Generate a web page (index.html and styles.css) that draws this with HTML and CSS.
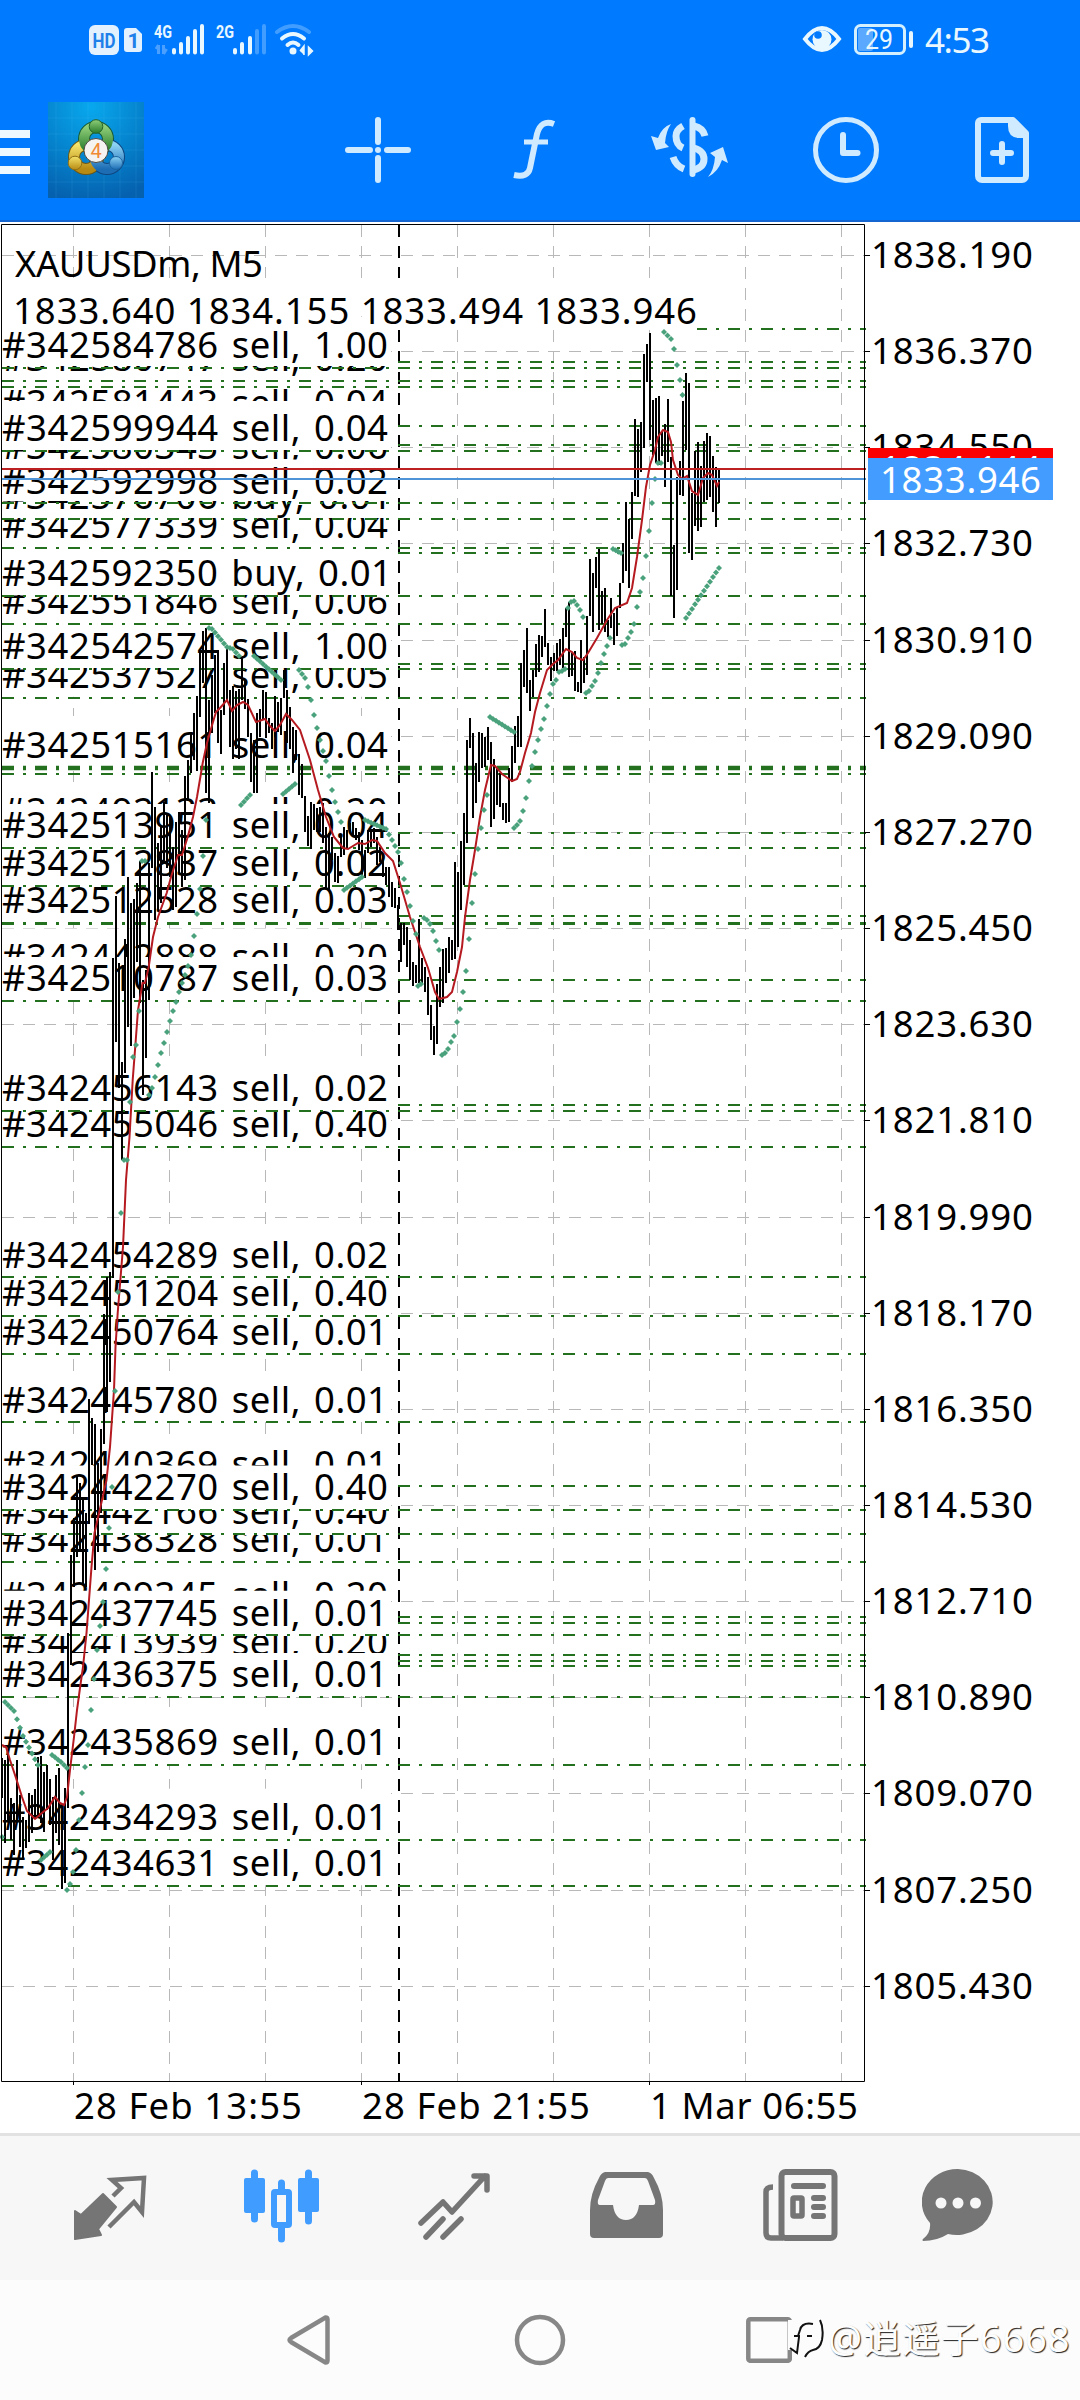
FILE: index.html
```
<!DOCTYPE html>
<html lang="en">
<head>
    <meta charset="UTF-8">
    <title>XAUUSDm, M5</title>
    <link rel="stylesheet" href="styles.css">
</head>
<body>
    <header class="header">
        <!-- Status bar -->
        <div class="status">
            <svg class="status-left" width="230" height="36" viewBox="86 22 230 36">
                <rect x="89" y="25" width="30" height="30" rx="6" fill="#e3f1ff"/>
                <text x="92.500" y="47.500" class="hd" textLength="23" lengthAdjust="spacingAndGlyphs">HD</text>
                <path d="M127 28h9l6 6v15a3 3 0 0 1-3 3h-12a3 3 0 0 1-3-3V31a3 3 0 0 1 3-3z" fill="#e3f1ff"/>
                <text x="127.500" y="47.500" class="hd">1</text>
                <text x="154" y="38" class="net" textLength="18" lengthAdjust="spacingAndGlyphs">4G</text>
                <path d="M158.500 45v9M156 49l2.500-4M163.500 45v9M166.500 49l-3 5" stroke="#4a9fff" stroke-width="3"/>
                <path d="M174 50v2.500M181 44v8.500M188 38v14.500M195 31v21.500M202 26v26.500" class="bars"/>
                <text x="216" y="38" class="net" textLength="18" lengthAdjust="spacingAndGlyphs">2G</text>
                <path d="M235 50v2.500M242 44v8.500M250 38v14.500" class="bars"/>
                <path d="M257 31v21.500M264 26v26.500" class="bars dim"/>
                <path d="M277 32q16-12 32 0" class="wave dim"/>
                <path d="M282 38.500q11-9 22 0M287.500 45q5.500-5 11 0" class="wave"/>
                <circle cx="293" cy="51" r="3.500" fill="#e9f7ff"/>
                <path d="M300 51l4-5v9M308.500 55v-8l4 4z" fill="#e9f7ff" stroke="#e9f7ff" stroke-width="1.500"/>
            </svg>
            <svg class="status-right" width="190" height="36" viewBox="802 22 190 36">
                <path d="M805 39q17-22 34 0q-17 22-34 0z" fill="none" stroke="#e9f7ff" stroke-width="4"/>
                <circle cx="822" cy="39.500" r="9.500" fill="#e9f7ff"/>
                <circle cx="818" cy="35" r="3.800" fill="#007aff"/>
                <rect x="858" y="28" width="15" height="23" rx="2" fill="#5aa9ff"/>
                <rect x="855.500" y="25.500" width="49" height="28" rx="5" fill="none" stroke="#d4f0ff" stroke-width="3"/>
                <path d="M911 33v13" stroke="#e9f7ff" stroke-width="4" stroke-linecap="round"/>
                <text x="865" y="49" class="batt" textLength="28" lengthAdjust="spacingAndGlyphs">29</text>
                <text x="925" y="53" class="time" textLength="65">4:53</text>
            </svg>
        </div>

        <!-- Toolbar -->
        <div class="toolbar">
            <svg class="menu" width="30" height="44" viewBox="0 0 30 44">
                <path d="M0 4h30M0 22h30M0 40h30" stroke="#eef9ff" stroke-width="8"/>
            </svg>
            <svg class="logo" width="96" height="96" viewBox="0 0 96 96">
                <defs>
                    <radialGradient id="sky" cx="45%" cy="5%" r="100%">
                        <stop offset="0" stop-color="#08a8ee"/>
                        <stop offset="0.500" stop-color="#0585cf"/>
                        <stop offset="1" stop-color="#0560ae"/>
                    </radialGradient>
                    <linearGradient id="green" x2="0" y2="1"><stop offset="0" stop-color="#8fce79"/><stop offset="1" stop-color="#287b2c"/></linearGradient>
                    <linearGradient id="gold" x2="0" y2="1"><stop offset="0" stop-color="#f5e36a"/><stop offset="1" stop-color="#b78a13"/></linearGradient>
                    <linearGradient id="blue" x2="0" y2="1"><stop offset="0" stop-color="#8cd2f4"/><stop offset="1" stop-color="#1d6db5"/></linearGradient>
                </defs>
                <rect width="96" height="96" fill="url(#sky)"/>
                <path d="M8 0v96M24 0v96M40 0v96M56 0v96M72 0v96M88 0v96M0 16h96M0 32h96M0 48h96M0 64h96M0 80h96" stroke="#6cc6ff" stroke-opacity="0.120"/>
                <circle cx="48" cy="37" r="12" fill="none" stroke="#165a36" stroke-width="12"/>
                <circle cx="38" cy="55" r="12" fill="none" stroke="#6c5715" stroke-width="12"/>
                <circle cx="59" cy="55" r="12" fill="none" stroke="#0e4580" stroke-width="12"/>
                <circle cx="38" cy="55" r="12" fill="none" stroke="url(#gold)" stroke-width="10"/>
                <circle cx="59" cy="55" r="12" fill="none" stroke="url(#blue)" stroke-width="10"/>
                <circle cx="48" cy="37" r="12" fill="none" stroke="url(#green)" stroke-width="10"/>
                <circle cx="48" cy="24.500" r="6.800" fill="url(#green)" stroke="#25632a"/>
                <circle cx="27" cy="61" r="6.800" fill="url(#gold)" stroke="#907015"/>
                <circle cx="68" cy="61" r="6.500" fill="url(#blue)" stroke="#1b64a1"/>
                <circle cx="48" cy="48.500" r="12" fill="#f4f3f2" stroke="#4c4b43"/>
                <text x="48" y="56" class="four">4</text>
            </svg>
            <svg class="cross" width="66" height="66" viewBox="0 0 66 66">
                <path d="M33 3v22M33 41v22M3 33h22M42 33h21" class="thick"/>
                <circle cx="33" cy="33" r="3" fill="#d0eaff"/>
            </svg>
            <svg class="func" width="44" height="62" viewBox="0 0 44 62">
                <path d="M41 5q-13-5-17 10l-7 34q-2 10-16 7" fill="none" stroke="#d0eaff" stroke-width="6"/>
                <path d="M11 23h24" stroke="#d0eaff" stroke-width="5"/>
            </svg>
            <svg class="dollar" width="80" height="62" viewBox="0 0 80 62">
                <path d="M42.500 3v54" class="thick"/>
                <path d="M33 9q-7 4-7 10q0 9 7 12M23 40q3 9 11 12M44 9q9 2 11 10M44 31q10 3 10 11q0 8-10 11" fill="none" stroke="#d0eaff" stroke-width="7"/>
                <path d="M21 7q-9 3-13 14l-7-2l5 14l13-3l-4-4q1-12 6-19zM58 60q10-5 14-17l6 3l-5-16l-13 6l5 4q-1 13-7 20z" fill="#d0eaff"/>
            </svg>
            <svg class="clock" width="68" height="68" viewBox="0 0 68 68">
                <circle cx="34" cy="34" r="30.500" fill="none" stroke="#d0eaff" stroke-width="5"/>
                <path d="M31 19v18h14.500" class="thick" stroke-linejoin="round"/>
            </svg>
            <svg class="doc" width="54" height="66" viewBox="0 0 54 66">
                <path d="M6 3h32l13 13v43a4 4 0 0 1-4 4H7a4 4 0 0 1-4-4V6a3 3 0 0 1 3-3z" fill="none" stroke="#d0eaff" stroke-width="6" stroke-linejoin="round"/>
                <path d="M33 3h5l14 15v3h-9q-10-1-10-12z" fill="#d0eaff"/>
                <path d="M18 36h18M27 27v18" class="thick"/>
            </svg>
        </div>
    </header>

    <!-- Chart, filled in by the script below -->
    <svg id="chart" class="chart" width="1080" height="1911" viewBox="0 222 1080 1911"></svg>

    <nav class="tabs">
        <svg class="tab" width="73" height="66" viewBox="0 0 73 66">
            <path d="M1 36l6 4L29 19l13 13l-18 22l3 6l-26 4z" fill="#757575" stroke="#757575" stroke-width="2" stroke-linejoin="round"/>
            <path d="M39 21l8-8l-9-8l32-2l-2 34l-8-10l-25 25" fill="none" stroke="#757575" stroke-width="4.500"/>
        </svg>
        <svg class="tab candles" width="75" height="74" viewBox="0 0 75 74">
            <path d="M10.500 4v46M64.500 4v48M37.500 14v9M37.500 58v12" stroke="#409cff" stroke-width="7" stroke-linecap="round"/>
            <rect x="0" y="9" width="21" height="35" rx="2" fill="#409cff"/>
            <rect x="54" y="9" width="21" height="34" rx="2" fill="#409cff"/>
            <rect x="30" y="23" width="15" height="33" rx="1" fill="#f7f7f7" stroke="#409cff" stroke-width="6"/>
        </svg>
        <svg class="tab trend" width="72" height="68" viewBox="0 0 72 68">
            <path d="M3 51l22-21l9 10L67 4M56 4h13v14M8 65l17-18M25 65l18-18" fill="none" stroke="#757575" stroke-width="5.500" stroke-linecap="round" stroke-linejoin="round"/>
        </svg>
        <svg class="tab inbox" width="73" height="66" viewBox="0 0 73 66">
            <path d="M15 0h43q4 1 6 6q9 16 9 32v24q0 4-4 4H4q-4 0-4-4V38Q0 22 9 6q2-5 6-6z" fill="#757575"/>
            <path d="M18 6h37q2 0 3 3l7 19q1 5-2 5H49q-2 15-13 15T23 33H10q-3 0-2-5l7-19q1-3 3-3z" fill="#f7f7f7"/>
        </svg>
        <svg class="tab news" width="75" height="72" viewBox="0 0 75 72">
            <rect x="18.500" y="3" width="53" height="66" rx="4" fill="none" stroke="#757575" stroke-width="6"/>
            <path d="M10 18q-7 0-7 5v41q0 5 5 5h12" fill="none" stroke="#757575" stroke-width="5.500"/>
            <path d="M31 17h29M51 29h9M51 38h9M51 47h9" stroke="#757575" stroke-width="6" stroke-linecap="round"/>
            <rect x="30" y="29" width="9" height="18" rx="1" fill="none" stroke="#757575" stroke-width="5.500"/>
        </svg>
        <svg class="tab chat" width="72" height="72" viewBox="0 0 72 72">
            <path d="M36 0a36 33 0 1 1-10 65Q15 72 1 72q-1-1 0-2q8-6 7-16A36 33 0 0 1 36 0z" fill="#757575"/>
            <circle cx="19" cy="34" r="5.500" fill="#f7f7f7"/>
            <circle cx="36" cy="34" r="5.500" fill="#f7f7f7"/>
            <circle cx="53.500" cy="34" r="5.500" fill="#f7f7f7"/>
        </svg>
    </nav>

    <footer class="system">
        <svg class="back" width="44" height="50" viewBox="0 0 44 50">
            <path d="M38.500 2.500q2 0 2 2v41q0 2-2 2L4 27q-3-2 0-4z" fill="none" stroke="#878787" stroke-width="4.500"/>
        </svg>
        <svg class="home" width="52" height="52" viewBox="0 0 52 52">
            <circle cx="26" cy="26" r="23" fill="none" stroke="#878787" stroke-width="4.500"/>
        </svg>
        <svg class="recent" width="46" height="46" viewBox="0 0 46 46">
            <rect x="2.300" y="2.300" width="41.500" height="41.500" rx="2" fill="none" stroke="#878787" stroke-width="4.500"/>
        </svg>
        <div class="watermark">
            <svg width="38" height="46" viewBox="0 0 38 46">
                <path d="M1 6h6l8-5h14v38l-10-4l-18 1z" fill="#fcfcfc"/>
                <path d="M26 10q-11-2-13 6l-2 6M7 22h6M12 23l-2 16l-7-5M20 22h5M33 6q4 8 2 20q-2 9-9 10q-5 1-8 7" fill="none" stroke="#111" stroke-width="2"/>
            </svg>
            <span class="author">@逍遥子6668</span>
        </div>
    </footer>

    <script>
        const svg = document.getElementById('chart');
        const NS = 'http://www.w3.org/2000/svg';

        function add(tag, attrs, text) {
            const el = document.createElementNS(NS, tag);
            for (const key in attrs) el.setAttribute(key, attrs[key]);
            if (text) el.textContent = text;
            svg.appendChild(el);
            return el;
        }

        function line(x1, y1, x2, y2, cls) {
            add('path', { d: 'M' + x1 + ' ' + y1 + 'L' + x2 + ' ' + y2, class: cls });
        }

        function label(text, x, y, width, cls) {
            return add('text', { x: x, y: y, textLength: width, class: cls || 'label' }, text);
        }

        // grid
        const rows = [];
        for (let i = 0; i < 19; i++) rows.push(Math.round(255 + i * 96.15) + 0.5);
        for (const y of rows) line(2, y, 864, y, 'grid');
        for (let x = 73.5; x < 864; x += 96) line(x, 225, x, 2081, 'grid');
        line(399, 225, 399, 2081, 'day');

        // orders: text, baseline, visible top, visible bottom
        const orders = [
            ['#342584786 sell, 1.00', 357.7, 320, 367],
            ['#342580747 sell, 0.20', 370.7, 366, 380],
            ['#342581443 sell, 0.04', 415, 380, 401],
            ['#342599944 sell, 0.04', 440.3, 401, 450],
            ['#342580343 sell, 0.06', 458.3, 450, 459.5],
            ['#342592998 sell, 0.02', 493.3, 460, 502],
            ['#342576706 buy, 0.01', 508, 501, 518],
            ['#342577339 sell, 0.04', 537.3, 518, 549],
            ['#342592350 buy, 0.01', 585.7, 549, 596],
            ['#342551846 sell, 0.06', 613.7, 595, 624],
            ['#342542574 sell, 1.00', 658.7, 624, 669],
            ['#342537527 sell, 0.05', 687.3, 668, 698],
            ['#342515161 sell, 0.04', 757, 715, 768],
            ['#342492133 sell, 0.20', 823, 780, 804],
            ['#342513951 sell, 0.04', 837.3, 804, 848],
            ['#342512837 sell, 0.02', 875.7, 848, 886],
            ['#342512528 sell, 0.03', 912.7, 886, 923],
            ['#342442888 sell, 0.20', 969.5, 930, 957],
            ['#342510787 sell, 0.03', 990.7, 957, 1001],
            ['#342456143 sell, 0.02', 1100.7, 1060, 1111],
            ['#342455046 sell, 0.40', 1136.7, 1109, 1147],
            ['#342454289 sell, 0.02', 1267, 1227, 1277],
            ['#342451204 sell, 0.40', 1305.7, 1277, 1316],
            ['#342450764 sell, 0.01', 1344, 1316, 1354],
            ['#342445780 sell, 0.01', 1412, 1371, 1422],
            ['#342440369 sell, 0.01', 1476, 1436, 1465.5],
            ['#342442270 sell, 0.40', 1499.7, 1466, 1510],
            ['#342442166 sell, 0.40', 1523.7, 1510, 1534],
            ['#342438328 sell, 0.01', 1551.7, 1535, 1562],
            ['#342409345 sell, 0.20', 1607, 1566, 1590.7],
            ['#342437745 sell, 0.01', 1625, 1591, 1635],
            ['#342413939 sell, 0.20', 1654.5, 1636, 1653],
            ['#342436375 sell, 0.01', 1686.7, 1653, 1697],
            ['#342435869 sell, 0.01', 1754.7, 1714, 1765],
            ['#342434293 sell, 0.01', 1829.7, 1789, 1840],
            ['#342434631 sell, 0.01', 1875.7, 1840, 1886]
        ];
        for (const o of orders) add('rect', { x: 2, y: o[1] - 41, width: 389, height: 50.5, class: 'cover' });

        orders.forEach((o, i) => {
            const clip = add('clipPath', { id: 'clip' + i });
            const rect = document.createElementNS(NS, 'rect');
            rect.setAttribute('width', 392);
            rect.setAttribute('y', o[2]);
            rect.setAttribute('height', o[3] - o[2]);
            clip.appendChild(rect);
            const t = label(o[0], 2, o[1] + 0.5, o[0].includes('buy') ? 390 : 386, 'label ticket');
            t.setAttribute('clip-path', 'url(#clip' + i + ')');
        });

        // order levels over the full width
        for (const y of [368, 381, 387, 451, 503, 519, 548, 596, 624, 669, 698, 774, 848, 886, 1001, 1111, 1147, 1277, 1316, 1354, 1422, 1510, 1534, 1562, 1635, 1697, 1765, 1840, 1886])
            line(2, y, 866, y, 'order');
        line(2, 768, 866, 768, 'order thick3');
        line(2, 923.5, 866, 923.5, 'order thick2');
        // levels that start right of the order texts
        for (const y of [362, 426, 445, 553, 664, 833, 916, 980, 1105, 1486, 1617, 1623, 1655, 1661, 1666])
            line(398, y, 866, y, 'order');
        line(695, 329, 866, 329, 'order');

        // symbol and OHLC
        add('rect', { x: 2, y: 278, width: 695, height: 38, class: 'cover' });
        add('rect', { x: 391, y: 278, width: 306, height: 52, class: 'cover' });
        label('XAUUSDm, M5', 15, 277, 248);
        label('1833.640 1834.155 1833.494 1833.946', 13, 324, 684);

        // high and low of each bar, one bar every 3px
        const bars = [
            1758,1798, 1760,1843, 1755,1820, 1798,1840, 1803,1855, 1760,1820, 1795,1847, 1817,1858, 1820,1848, 1793,1842,
            1795,1833, 1789,1818, 1757,1815, 1756,1823, 1772,1832, 1765,1810, 1779,1825, 1797,1860, 1775,1833, 1768,1845,
            1812,1889, 1788,1883, 1633,1808, 1555,1665, 1518,1587, 1475,1557, 1483,1552, 1497,1585, 1513,1587, 1399,1524,
            1418,1465, 1424,1570, 1463,1552, 1429,1513, 1314,1444, 1277,1412, 1272,1382, 958,1278, 896,1042, 963,1088,
            1062,1160, 939,1073, 877,1027, 903,1046, 899,998, 883,962, 861,1003, 980,1095, 970,1058, 863,1000,
            772,868, 807,920, 843,910, 827,903, 802,863, 813,868, 817,877, 847,910, 822,907, 812,873,
            830,887, 776,880, 760,801, 733,773, 713,760, 696,771, 653,717, 631,683, 628,793, 700,803,
            675,733, 655,713, 650,743, 710,754, 663,715, 648,700, 690,747, 686,759, 691,749, 689,759,
            658,700, 680,709, 699,737, 733,782, 740,793, 713,793, 709,737, 690,719, 692,738, 718,733,
            723,749, 696,737, 702,732, 698,735, 670,698, 690,743, 707,749, 727,773, 730,760, 754,795,
            764,798, 796,832, 816,846, 802,849, 804,830, 808,832, 807,832, 803,843, 827,888, 833,889,
            837,860, 853,882, 856,883, 837,857, 827,855, 830,848, 823,833, 822,837, 828,840, 832,850,
            840,877, 850,878, 830,853, 830,847, 828,843, 837,865, 847,862, 860,877, 867,885, 867,897,
            882,907, 888,908, 905,930, 923,962, 923,945, 927,967, 940,980, 962,986, 965,983, 919,983,
            958,985, 967,992, 977,1015, 1005,1040, 1026,1055, 984,1044, 967,1007, 949,1003, 948,983, 937,973,
            940,960, 862,959, 872,947, 841,910, 813,885, 740,843, 718,748, 733,818, 763,803, 732,782,
            733,768, 737,767, 727,760, 742,827, 759,819, 768,805, 773,807, 803,820, 803,823, 768,822,
            746,782, 726,763, 716,747, 663,747, 650,687, 628,693, 680,711, 670,697, 644,677, 635,672,
            636,657, 609,647, 643,665, 657,681, 653,671, 643,671, 639,665, 628,668, 608,637, 602,677,
            653,676, 651,691, 682,692, 640,693, 657,683, 616,675, 559,616, 573,632, 557,588, 549,630,
            591,624, 588,632, 620,637, 598,628, 613,645, 607,636, 583,608, 543,583, 502,571, 519,588,
            492,539, 419,496, 429,497, 422,472, 354,448, 344,382, 333,440, 400,455, 398,463, 396,465,
            432,456, 424,487, 399,462, 457,596, 545,618, 477,590, 461,495, 401,496, 373,450, 383,553,
            493,560, 451,526, 442,531, 466,527, 441,502, 433,500, 436,497, 456,512, 467,527, 468,503
        ];
        for (let i = 0; i < bars.length; i += 2) {
            const x = 2 + i / 2 * 3;
            line(x, bars[i], x, bars[i + 1], 'candle');
        }

        // moving average
        add('polyline', { class: 'average', points: '2,1745 6,1747 10,1760 16,1778 22,1797 27,1811 35,1819 42,1813 48,1808 55,1797 60,1803 64,1805 67,1797 70,1770 74,1737 77,1710 80,1688 83,1667 86.500,1633 91.500,1567 94.500,1533 102,1500 106.500,1480 110,1447 114,1390 115.500,1347 117.700,1313 123,1247 126,1180 129.500,1137 132.700,1080 135,1050 138,1010 142.500,983 145,983 148.700,967 153,937 158,917 166.700,893 171,877 178,855 182,855 187.700,837 193,817 197,797 202.700,763 207,743 212.700,723 216,712 220,708 227,700 232,711 237,705 243,702 248,705 256,722 265,719 270,726 275,731 280,725 286,714 292,720 300,730 310,760 318,790 326,817 334,837 343,848 348,849 358,843 365,844 372,840 377,841 385,853 393,861 400,883 410,917 420,947 428,968 435,992 439,999 447,997 452,992 457,972 462,947 465,917 470,880 475,850 480,817 485,790 491,765 495,766 502,774 512,781 517,779 520,772 525,753 531,733 535,712 540,693 547,670 553,664 558,660 566,649 572,652 577,658 583,660 588,653 597,638 607,620 615,608 627,603 632,588 637,557 642,520 646,487 650,465 655,450 658,437 663,430 668,432 671,442 673,460 678,475 682,479 687,476 692,491 698,495 703,478 708,473 712,475 717,486 719,482' });

        // parabolic SAR, runs of dots
        const runs = [
            [2,1837],
            [5,1702, 14,1711, 23,1736, 38,1765],
            [52,1755, 61,1762, 67,1768],
            [41,1860, 50,1852],
            [67,1890, 70,1884, 73,1872, 76,1850, 79,1820, 82,1793, 85,1767, 88,1745, 91,1710, 94,1679, 97,1650, 100,1626, 103,1602, 106,1569, 109,1528, 112,1487, 115,1391, 118,1292, 121,1213, 124,1160, 127,1160, 130,1102, 133,1057, 136,1045, 139,1011],
            [142,861, 145,861],
            [149,1095, 152,1088, 155,1077, 158,1065, 161,1053, 164,1043, 167,1032, 170,1021, 173,1011, 176,1002, 179,992, 182,983, 185,975, 188,966, 191,955, 194,936, 197,914, 200,889, 203,856, 206,820],
            [209,628, 212,629, 227,647, 233,649, 239,656],
            [254,656, 281,680],
            [241,805, 250,795],
            [283,794, 295,784],
            [299,670, 302,674, 305,678, 308,687, 311,700, 314,715, 317,728, 320,740, 323,751, 326,761, 329,776, 332,790, 335,802, 338,812, 341,822],
            [344,890, 362,877],
            [365,820, 374,824, 386,829, 392,840, 398,852, 401,863, 404,879, 407,892, 410,906, 413,921, 416,934],
            [418,986, 421,984],
            [424,918, 427,920, 430,924, 433,931, 436,941, 439,950],
            [442,1055, 445,1053, 448,1049, 451,1042, 454,1036, 457,1022, 460,1009, 463,992, 466,971, 469,939, 472,903, 475,874, 478,849, 481,828, 484,810, 487,795],
            [490,717, 514,732],
            [514,828, 517,825, 520,821, 523,811, 526,798, 529,781, 532,766, 535,752, 538,740, 541,729, 544,719, 547,706, 550,694, 553,684, 556,680, 559,672, 562,671, 565,669],
            [568,608, 571,602, 574,601, 577,605, 580,610, 583,617],
            [586,693, 589,691, 592,686, 595,681, 598,673, 601,663, 604,654, 607,646, 610,638],
            [613,549, 621,553],
            [622,645, 625,644, 628,638, 631,632, 634,624, 637,607, 640,592, 643,578, 646,556, 649,531, 652,503, 655,479, 658,463, 661,463],
            [664,332, 671,339],
            [674,349], [677,365], [680,380], [682.5,395],
            [686,618, 719,568]
        ];
        function dot(x, y) {
            add('path', { d: 'M' + (x - 3) + ' ' + y + 'l3-3 3 3-3 3z', class: 'sar' });
        }
        for (const r of runs) {
            dot(r[0], r[1]);
            for (let i = 2; i < r.length; i += 2) {
                const steps = Math.max(1, Math.round((r[i] - r[i - 2]) / 3));
                for (let s = 1; s <= steps; s++)
                    dot(r[i - 2] + (r[i] - r[i - 2]) * s / steps, r[i - 1] + (r[i + 1] - r[i - 1]) * s / steps);
            }
        }

        line(2, 469, 866, 469, 'ask');
        line(2, 479, 866, 479, 'bid');

        // frame and axes
        add('path', { d: 'M1.500 224.500H864.500V2081.500H1.500z', class: 'frame' });
        rows.forEach((y, i) => {
            line(864, y, 870, y, 'frame');
            label((1838.19 - i * 1.82).toFixed(3), 871, y + 12.5, 162);
        });
        for (const x of [73.5, 361.5, 649.5]) line(x, 2081, x, 2085, 'frame');
        label('28 Feb 13:55', 74, 2119, 228);
        label('28 Feb 21:55', 362, 2119, 228);
        label('1 Mar 06:55', 650, 2119, 208);

        // ask and bid boxes
        add('rect', { x: 868, y: 448, width: 185, height: 20, class: 'ask-box' });
        label('1834.144', 880, 482, 161, 'light');
        add('rect', { x: 868, y: 458, width: 185, height: 42, class: 'bid-box' });
        label('1833.946', 880, 492.5, 161, 'light');
    </script>
</body>
</html>
```
FILE: styles.css
```
body {
    margin: 0;
    width: 1080px;
    height: 2400px;
    overflow: hidden;
    background-color: #fff;
    font-family: "Noto Sans", "Noto Sans CJK SC", sans-serif;
}
svg {
    display: block;
    flex: none;
}
.header {
    box-sizing: border-box;
    height: 222px;
    background-color: #007aff;
    border-bottom: 2px solid #1565d0;
}
.status {
    display: flex;
    justify-content: space-between;
    height: 58px;
    padding: 22px 88px 0 86px;
    box-sizing: border-box;
}
.hd {
    font: bold 21px "Roboto", sans-serif;
    fill: #1f80ea;
}
.net {
    font: bold 18px "Roboto", sans-serif;
    fill: #e9f7ff;
}
.bars {
    stroke: #e9f7ff;
    stroke-width: 4px;
    stroke-linecap: round;
}
.wave {
    fill: none;
    stroke: #e9f7ff;
    stroke-width: 4px;
    stroke-linecap: round;
}
.dim {
    stroke: #419dff;
}
.batt {
    font: 27px "Roboto", sans-serif;
    fill: #e9f7ff;
}
.time {
    font: 35px "Noto Sans", sans-serif;
    fill: #e9f7ff;
}
.toolbar {
    display: flex;
    align-items: center;
    height: 96px;
    margin-top: 44px;
}
.thick {
    fill: none;
    stroke: #d0eaff;
    stroke-width: 6px;
    stroke-linecap: round;
}
.menu {
    margin-top: 4px;
}
.logo {
    margin-left: 18px;
}
.four {
    font: 20px "Roboto", sans-serif;
    fill: #f08a35;
    text-anchor: middle;
}
.cross {
    margin-left: 201px;
}
.func {
    margin-left: 102px;
}
.dollar {
    margin-left: 93px;
    margin-top: -4px;
}
.clock {
    margin-left: 82px;
}
.doc {
    margin-left: 95px;
}

/* chart */
.chart {
    font-family: "Noto Sans", sans-serif;
    font-size: 36.5px;
    fill: #000;
    background-color: #fff;
}
.chart .ticket {
    word-spacing: 3px;
}
.chart .grid {
    stroke: #b8b8b8;
    stroke-width: 1px;
    stroke-dasharray: 12 9;
}
.chart .day {
    stroke: #000;
    stroke-width: 2px;
    stroke-dasharray: 12 9;
}
.chart .cover {
    fill: #fff;
}
.chart .order {
    stroke: #23701f;
    stroke-width: 2px;
    stroke-dasharray: 12 9 3 9;
}
.chart .thick2 {
    stroke-width: 3px;
}
.chart .thick3 {
    stroke-width: 4.5px;
}
.chart .frame {
    fill: none;
    stroke: #000;
    stroke-width: 1px;
}
.chart .candle {
    stroke: #000;
    stroke-width: 2px;
}
.chart .average {
    fill: none;
    stroke: #b51a20;
    stroke-width: 2px;
}
.chart .sar {
    fill: #4aa27c;
}
.chart .ask {
    stroke: #bc2020;
    stroke-width: 2px;
}
.chart .bid {
    stroke: #4f94d6;
    stroke-width: 2px;
}
.chart .ask-box {
    fill: #fb0000;
}
.chart .bid-box {
    fill: #439cff;
}
.chart .light {
    fill: #fff;
}

/* bottom tabs */
.tabs {
    display: flex;
    align-items: flex-start;
    box-sizing: border-box;
    height: 147px;
    padding: 36px 0 0 74px;
    background-color: #f7f7f7;
    border-top: 3px solid #e2e2e2;
}
.tab {
    margin-top: 3px;
}
.candles {
    margin: -3px 0 0 97px;
}
.trend {
    margin: 0 0 0 99px;
}
.inbox {
    margin: 0 0 0 100px;
}
.news {
    margin: -3px 0 0 100px;
}
.chat {
    margin: -3px 0 0 84px;
}
.system {
    position: relative;
    display: flex;
    align-items: center;
    height: 120px;
    padding-left: 287px;
    background-color: #fcfcfc;
}
.home {
    margin-left: 183px;
}
.recent {
    margin-left: 180px;
}
.watermark {
    position: absolute;
    left: 787px;
    top: 32px;
    display: flex;
    align-items: center;
}
.author {
    margin-left: 3px;
    font-size: 38px;
    line-height: 50px;
    letter-spacing: 0.9px;
    white-space: nowrap;
    color: #fdfdfd;
    text-shadow: 1px 1px 1px #222;
}
```
